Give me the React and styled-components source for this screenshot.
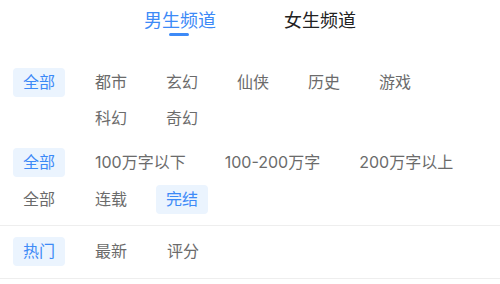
import React from "react";
import styled, { createGlobalStyle } from "styled-components";

const GlobalStyle = createGlobalStyle`
  body {
    margin: 0;
    background: #fff;
    font-family: "Noto Sans CJK SC", "Noto Sans", sans-serif;
  }
`;

const Page = styled.div`
  width: 500px;
  height: 284px;
  overflow: hidden;
`;

const Tabs = styled.div`
  display: flex;
  justify-content: center;
  gap: 68px;
  height: 44px;
  padding-top: 6px;
  box-sizing: border-box;
`;

const Tab = styled.div`
  position: relative;
  font-size: 18px;
  line-height: 26px;
  color: ${(p) => (p.$active ? "#3d8af7" : "#222")};
  & span {
    position: absolute;
    left: 50%;
    top: 27px;
    width: 20px;
    height: 3px;
    margin-left: -11px;
    border-radius: 2px;
    background: #3d8af7;
  }
`;

const Filters = styled.div`
  display: flex;
  flex-direction: column;
  padding: 24px 13px 0;
`;

const Group = styled.div`
  display: flex;
  align-items: flex-start;
  margin-bottom: ${(p) => p.$space || 8}px;
`;

const List = styled.div`
  display: flex;
  flex-wrap: wrap;
  flex: 1;
  column-gap: 19px;
  row-gap: 7px;
  margin-left: 20px;
`;

const Chip = styled.div`
  height: 29px;
  line-height: 29px;
  padding: 0 10px;
  border-radius: 4px;
  font-family: Inter, "Noto Sans CJK SC", sans-serif;
  font-size: 16px;
  white-space: nowrap;
  color: ${(p) => (p.$active ? "#3d8af7" : "#6b6b6b")};
  background: ${(p) => (p.$active ? "#ebf4fe" : "transparent")};
`;

const SortBar = styled.div`
  display: flex;
  gap: 20px;
  padding: 11px 13px 12px;
  border-top: 1px solid #eeeeee;
  border-bottom: 1px solid #eeeeee;
`;

const groups = [
  { all: true, items: ["都市", "玄幻", "仙侠", "历史", "游戏", "科幻", "奇幻"], active: -1, space: 15 },
  { all: true, items: ["100万字以下", "100-200万字", "200万字以上"], active: -1, space: 8 },
  { all: false, items: ["连载", "完结"], active: 1, space: 11 },
];

export default function App() {
  return (
    <Page>
      <GlobalStyle />
      <Tabs>
        <Tab $active>
          男生频道
          <span />
        </Tab>
        <Tab>女生频道</Tab>
      </Tabs>
      <Filters>
        {groups.map((g, i) => (
          <Group key={i} $space={g.space}>
            <Chip $active={g.all}>全部</Chip>
            <List>
              {g.items.map((it, j) => (
                <Chip key={it} $active={j === g.active}>
                  {it}
                </Chip>
              ))}
            </List>
          </Group>
        ))}
      </Filters>
      <SortBar>
        <Chip $active>热门</Chip>
        <Chip>最新</Chip>
        <Chip>评分</Chip>
      </SortBar>
    </Page>
  );
}
